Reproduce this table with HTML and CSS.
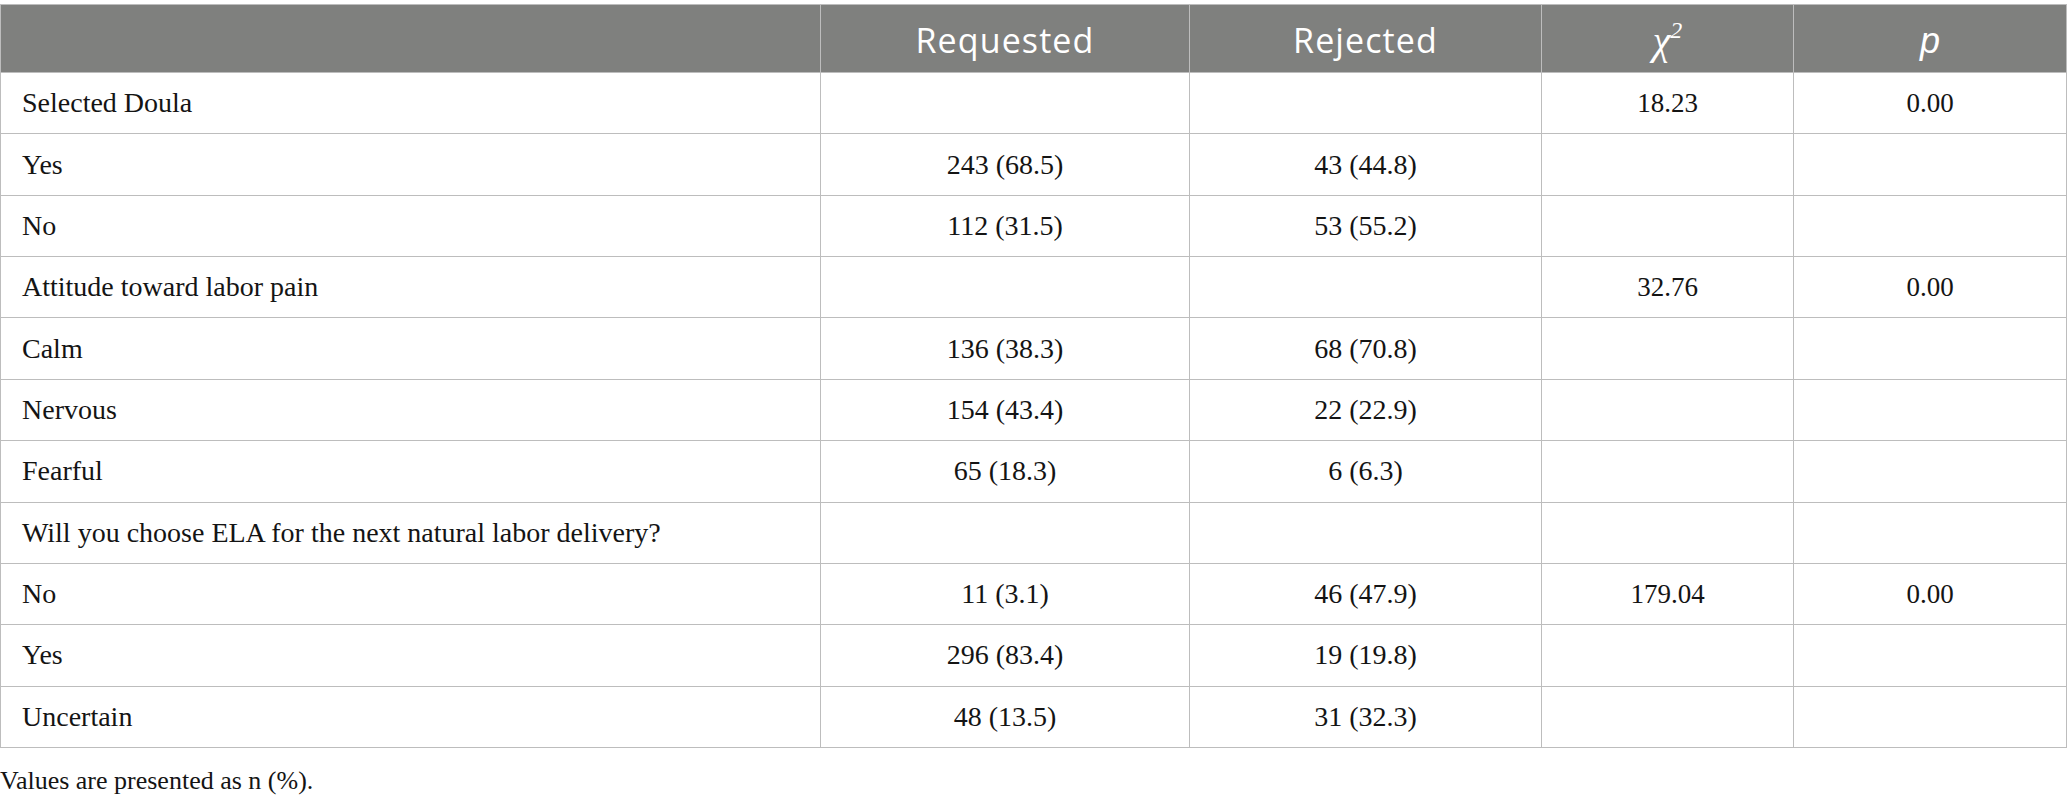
FILE: index.html
```html
<!DOCTYPE html>
<html lang="en">
<head>
<meta charset="utf-8">
<title>Table</title>
<link rel="stylesheet" href="styles.css">
</head>
<body>
<div class="page">
  <table class="data">
    <colgroup>
      <col class="c-label">
      <col class="c-req">
      <col class="c-rej">
      <col class="c-chi">
      <col class="c-p">
    </colgroup>
    <thead>
      <tr>
        <th></th>
        <th>Requested</th>
        <th>Rejected</th>
        <th><span class="chi">χ<sup>2</sup></span></th>
        <th><span class="pv">p</span></th>
      </tr>
    </thead>
    <tbody>
      <tr><td class="label">Selected Doula</td><td></td><td></td><td class="stat">18.23</td><td class="stat">0.00</td></tr>
      <tr><td class="label">Yes</td><td>243 (68.5)</td><td>43 (44.8)</td><td></td><td></td></tr>
      <tr><td class="label">No</td><td>112 (31.5)</td><td>53 (55.2)</td><td></td><td></td></tr>
      <tr><td class="label">Attitude toward labor pain</td><td></td><td></td><td class="stat">32.76</td><td class="stat">0.00</td></tr>
      <tr><td class="label">Calm</td><td>136 (38.3)</td><td>68 (70.8)</td><td></td><td></td></tr>
      <tr><td class="label">Nervous</td><td>154 (43.4)</td><td>22 (22.9)</td><td></td><td></td></tr>
      <tr><td class="label">Fearful</td><td>65 (18.3)</td><td>6 (6.3)</td><td></td><td></td></tr>
      <tr><td class="label">Will you choose ELA for the next natural labor delivery?</td><td></td><td></td><td></td><td></td></tr>
      <tr><td class="label">No</td><td>11 (3.1)</td><td>46 (47.9)</td><td class="stat">179.04</td><td class="stat">0.00</td></tr>
      <tr><td class="label">Yes</td><td>296 (83.4)</td><td>19 (19.8)</td><td></td><td></td></tr>
      <tr><td class="label">Uncertain</td><td>48 (13.5)</td><td>31 (32.3)</td><td></td><td></td></tr>
    </tbody>
  </table>
  <p class="note">Values are presented as n (%).</p>
</div>
</body>
</html>
```
FILE: styles.css
```css
html, body {
  margin: 0;
  padding: 0;
  background: #ffffff;
}

.page {
  padding-top: 4px;
  width: 2067px;
}

.data {
  border-collapse: collapse;
  table-layout: fixed;
  width: 2066px;
  font-family: "Liberation Serif", "Times New Roman", serif;
  font-size: 28px;
  color: #141414;
}

.c-label { width: 820px; }
.c-req { width: 369px; }
.c-rej { width: 352px; }
.c-chi { width: 252px; }
.c-p { width: 273px; }

.data th,
.data td {
  border: 1px solid #bdbdbd;
  padding: 0;
  text-align: center;
  vertical-align: middle;
}

.data thead tr {
  height: 68px;
}

.data th {
  background: #7f807e;
  color: #ffffff;
  font-family: "Open Sans", "Noto Sans", sans-serif;
  font-weight: 400;
  font-size: 34px;
  letter-spacing: 1.1px;
  padding-top: 3px;
}

.data tbody tr {
  height: 61.36px;
}

.data td.label {
  text-align: left;
  padding-left: 21px;
}

.data td.stat {
  font-size: 27px;
}

.chi {
  font-family: "Liberation Serif", "Times New Roman", serif;
  font-style: italic;
  font-size: 40px;
  letter-spacing: 0;
}

.chi sup {
  font-size: 24px;
  font-style: italic;
  vertical-align: 16px;
  line-height: 0;
}

.pv {
  font-family: "Liberation Sans", Arial, sans-serif;
  font-style: italic;
  font-size: 36px;
  letter-spacing: 0;
}

.note {
  margin: 17px 0 0 0;
  font-family: "Liberation Serif", "Times New Roman", serif;
  font-size: 26px;
  color: #141414;
  line-height: 1.2;
}
```
